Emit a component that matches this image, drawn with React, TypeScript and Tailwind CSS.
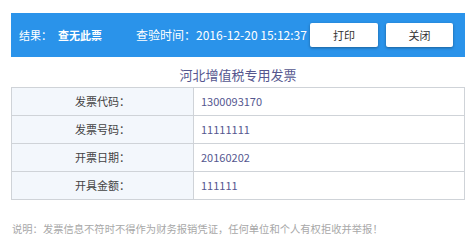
const ROWS: { label: string; value: string }[] = [
  { label: "发票代码：", value: "1300093170" },
  { label: "发票号码：", value: "11111111" },
  { label: "开票日期：", value: "20160202" },
  { label: "开具金额：", value: "111111" },
];

const FONT = "font-['Microsoft_YaHei','Noto_Sans_CJK_SC',sans-serif]";

export default function App() {
  return (
    <div className={`w-[476px] h-[242px] bg-white pt-[13px] px-[11px] ${FONT}`}>
      <div className="h-[44px] bg-[#2a93ea] flex items-center pl-[8px] pr-[12px] text-[11px] text-white">
        <span>结果：</span>
        <span className="font-bold ml-[6px]">查无此票</span>
        <span className="ml-[34px] text-[12px]">查验时间：2016-12-20 15:12:37</span>
        <div className="ml-auto flex gap-[8px]">
          <button
            type="button"
            className="w-[68px] h-[24px] bg-white text-[#333] text-[11px] rounded-[2px] shadow-[0_1px_3px_rgba(0,0,0,0.35)]"
          >
            打印
          </button>
          <button
            type="button"
            className="w-[67px] h-[24px] bg-white text-[#333] text-[11px] rounded-[2px] shadow-[0_1px_3px_rgba(0,0,0,0.35)]"
          >
            关闭
          </button>
        </div>
      </div>

      <h2 className="mt-[7px] h-[22px] text-center text-[13px] leading-[22px] text-[#55578f]">
        河北增值税专用发票
      </h2>

      <table className="mt-[1px] w-full border-collapse border border-[#cfd3d8] text-[11px]">
        <tbody>
          {ROWS.map(({ label, value }) => (
            <tr key={label} className="h-[28px]">
              <td className="w-[182px] border border-[#cfd3d8] bg-[#f3f7fc] text-center text-[#444]">
                {label}
              </td>
              <td className="border border-[#cfd3d8] pl-[7px] text-[#55578f]">{value}</td>
            </tr>
          ))}
        </tbody>
      </table>

      <p className="mt-[21px] pl-[1px] text-[10.3px] text-[#a8a8a8]">
        说明：发票信息不符时不得作为财务报销凭证，任何单位和个人有权拒收并举报！
      </p>
    </div>
  );
}
